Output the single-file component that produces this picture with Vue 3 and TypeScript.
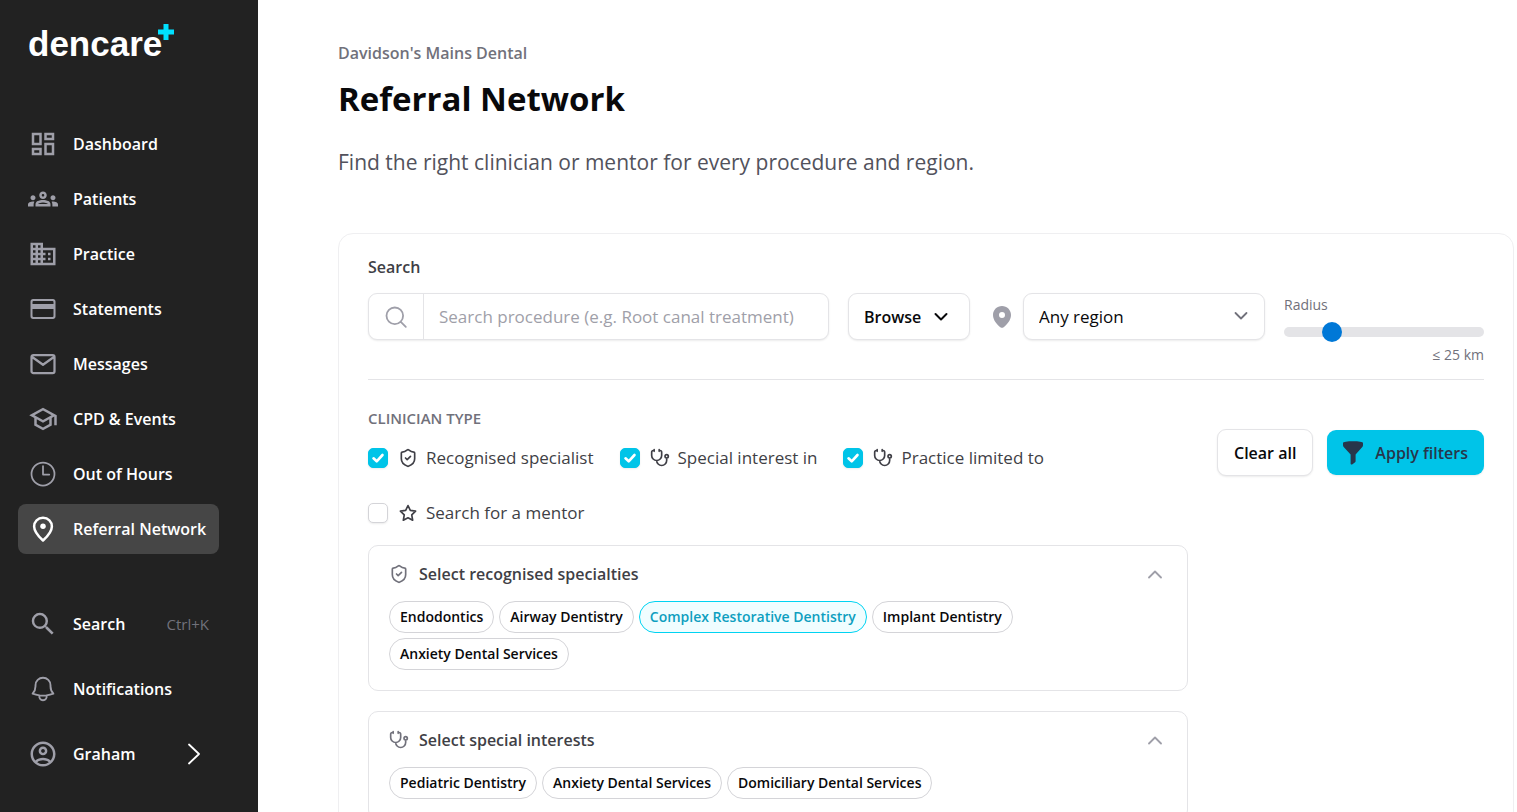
<script setup lang="ts">
import { ref } from 'vue'

interface NavItem {
  label: string
  icon: string
  active?: boolean
}

interface ClinicianType {
  label: string
  icon: 'shield' | 'stethoscope' | 'star'
  checked: boolean
}

interface Chip {
  label: string
  selected?: boolean
}

interface Panel {
  title: string
  icon: 'shield' | 'stethoscope'
  chips: Chip[]
}

const solid: Record<string, string> = {
  dashboard:
    'M19 5v2h-4V5h4M9 5v6H5V5h4m10 8v6h-4v-6h4M9 17v2H5v-2h4M21 3h-8v6h8V3zM11 3H3v10h8V3zm10 8h-8v10h8V11zm-10 4H3v6h8v-6z',
  groups:
    'M4 13c1.1 0 2-.9 2-2s-.9-2-2-2-2 .9-2 2 .9 2 2 2zm1.13 1.1c-.37-.06-.74-.1-1.13-.1-.99 0-1.93.21-2.78.58C.48 14.9 0 15.62 0 16.43V18h4.5v-1.61c0-.83.23-1.61.63-2.29zM20 13c1.1 0 2-.9 2-2s-.9-2-2-2-2 .9-2 2 .9 2 2 2zm4 3.43c0-.81-.48-1.53-1.22-1.85-.85-.37-1.79-.58-2.78-.58-.39 0-.76.04-1.13.1.4.68.63 1.46.63 2.29V18H24v-1.57zm-7.76-2.78c-1.17-.52-2.61-.9-4.24-.9-1.63 0-3.07.39-4.24.9C6.68 14.13 6 15.21 6 16.39V18h12v-1.61c0-1.18-.68-2.26-1.76-2.74zM8.07 16c.09-.23.13-.39.91-.69.97-.38 1.99-.56 3.02-.56s2.05.18 3.02.56c.77.3.81.46.91.69H8.07zM12 8c.55 0 1 .45 1 1s-.45 1-1 1-1-.45-1-1 .45-1 1-1m0-2c-1.66 0-3 1.34-3 3s1.34 3 3 3 3-1.34 3-3-1.34-3-3-3z',
  building:
    'M12 7V3H2v18h20V7H12zM6 19H4v-2h2v2zm0-4H4v-2h2v2zm0-4H4V9h2v2zm0-4H4V5h2v2zm4 12H8v-2h2v2zm0-4H8v-2h2v2zm0-4H8V9h2v2zm0-4H8V5h2v2zm10 12h-8v-2h2v-2h-2v-2h2v-2h-2V9h8v10zm-2-8h-2v2h2v-2zm0 4h-2v2h2v-2z',
  card: 'M20 4H4c-1.110 0-1.990.890-1.990 2L2 18c0 1.110.890 2 2 2h16c1.110 0 2-.890 2-2V6c0-1.110-.890-2-2-2zm.4 13.600c0 .5-.3.8-.8.8H4.400c-.5 0-.8-.3-.8-.8V12h16.800v5.600zm0-9.600H3.600V6.400c0-.5.3-.8.8-.8h15.200c.5 0 .8.3.8.8V8z',
  school:
    'M12 3 1 9l4 2.180v6L12 21l7-3.820v-6l2-1.090V17h2V9L12 3zm6.820 6L12 12.720 5.180 9 12 5.280 18.820 9zM17 15.990l-5 2.730-5-2.730v-3.720L12 15l5-2.730v3.720z',
  search:
    'M15.500 14h-.790l-.280-.270A6.471 6.471 0 0 0 16 9.500 6.500 6.500 0 1 0 9.500 16c1.610 0 3.090-.590 4.230-1.570l.270.280v.790l5 4.990L20.490 19l-4.990-5zm-6 0C7.010 14 5 11.990 5 9.500S7.010 5 9.500 5 14 7.010 14 9.500 11.990 14 9.500 14z',
  account:
    'M12 2C6.480 2 2 6.480 2 12s4.480 10 10 10 10-4.480 10-10S17.520 2 12 2zM7.350 18.500C8.660 17.560 10.260 17 12 17s3.340.560 4.650 1.500C15.340 19.440 13.740 20 12 20s-3.340-.560-4.650-1.500zm10.790-1.380C16.450 15.800 14.320 15 12 15s-4.450.8-6.140 2.120C4.700 15.730 4 13.950 4 12c0-4.420 3.580-8 8-8s8 3.580 8 8c0 1.950-.7 3.730-1.860 5.120zM12 6c-1.930 0-3.500 1.570-3.500 3.500S10.070 13 12 13s3.500-1.570 3.500-3.500S13.930 6 12 6zm0 5c-.830 0-1.500-.670-1.500-1.500S11.170 8 12 8s1.500.670 1.500 1.500S12.830 11 12 11z',
}

const lined: Record<string, { d: string; w: number }> = {
  mail: {
    d: 'M4.300 4.800h15.400a1.500 1.500 0 0 1 1.500 1.500v11.400a1.500 1.500 0 0 1-1.500 1.500H4.300a1.500 1.500 0 0 1-1.500-1.500V6.300a1.500 1.500 0 0 1 1.500-1.500zM3.600 6.600 12 12.600l8.400-6',
    w: 1.8,
  },
  clock: { d: 'M12 2.800a9.200 9.200 0 1 0 0 18.400a9.200 9.200 0 1 0 0-18.400zM12 5.600v6.800h5', w: 1.4 },
  pin: {
    d: 'M12 3C7.800 3 4.900 6.100 4.900 9.900c0 4.700 4.300 8.700 7.100 11.300 2.800-2.600 7.100-6.600 7.100-11.300C19.100 6.100 16.200 3 12 3z',
    w: 2,
  },
  bell: {
    d: 'M14.857 17.082a23.848 23.848 0 0 0 5.454-1.310A8.967 8.967 0 0 1 18 9.750V9A6 6 0 0 0 6 9v.750a8.967 8.967 0 0 1-2.312 6.022c1.733.640 3.560 1.085 5.455 1.310m5.714 0a24.255 24.255 0 0 1-5.714 0m5.714 0a3 3 0 1 1-5.714 0',
    w: 1.5,
  },
}

const small: Record<string, string> = {
  shield:
    'M20 13c0 5-3.500 7.500-7.660 8.950a1 1 0 0 1-.670-.010C7.500 20.500 4 18 4 13V6a1 1 0 0 1 1-1c2 0 4.500-1.200 6.240-2.720a1.170 1.170 0 0 1 1.520 0C14.510 3.810 17 5 19 5a1 1 0 0 1 1 1zM9 12l2 2 4-4',
  stethoscope:
    'M11 2v2M5 2v2M5 3H4a2 2 0 0 0-2 2v4a6 6 0 0 0 12 0V5a2 2 0 0 0-2-2h-1M8 15a6 6 0 0 0 12 0v-3M20 8a2 2 0 1 0 0 4a2 2 0 1 0 0-4z',
  star: 'M12 3l2.800 5.900 6.300.9-4.600 4.500 1.100 6.400L12 17.700l-5.600 3 1.100-6.400L2.900 9.800l6.300-.9z',
}

const primaryNav: NavItem[] = [
  { label: 'Dashboard', icon: 'dashboard' },
  { label: 'Patients', icon: 'groups' },
  { label: 'Practice', icon: 'building' },
  { label: 'Statements', icon: 'card' },
  { label: 'Messages', icon: 'mail' },
  { label: 'CPD & Events', icon: 'school' },
  { label: 'Out of Hours', icon: 'clock' },
  { label: 'Referral Network', icon: 'pin', active: true },
]

const clinicianTypes = ref<ClinicianType[]>([
  { label: 'Recognised specialist', icon: 'shield', checked: true },
  { label: 'Special interest in', icon: 'stethoscope', checked: true },
  { label: 'Practice limited to', icon: 'stethoscope', checked: true },
  { label: 'Search for a mentor', icon: 'star', checked: false },
])

const panels = ref<Panel[]>([
  {
    title: 'Select recognised specialties',
    icon: 'shield',
    chips: [
      { label: 'Endodontics' },
      { label: 'Airway Dentistry' },
      { label: 'Complex Restorative Dentistry', selected: true },
      { label: 'Implant Dentistry' },
      { label: 'Anxiety Dental Services' },
    ],
  },
  {
    title: 'Select special interests',
    icon: 'stethoscope',
    chips: [
      { label: 'Pediatric Dentistry' },
      { label: 'Anxiety Dental Services' },
      { label: 'Domiciliary Dental Services' },
    ],
  },
])

const query = ref('')
const region = ref('any')
const radius = ref(25)

function clearAll() {
  query.value = ''
  region.value = 'any'
  clinicianTypes.value.forEach((t) => (t.checked = false))
  panels.value.forEach((p) => p.chips.forEach((c) => (c.selected = false)))
}
</script>

<template>
  <div class="app">
    <aside class="sidebar">
      <a class="logo" href="#" aria-label="dencare plus">
        <span>dencare</span>
        <svg class="plus" viewBox="0 0 16 16" aria-hidden="true"><path d="M5.500 0h5v5.500H16v5h-5.500V16h-5v-5.500H0v-5h5.500z" /></svg>
      </a>

      <nav class="nav primary" aria-label="Main">
        <a v-for="item in primaryNav" :key="item.label" href="#" class="nav-item" :class="{ active: item.active }">
          <svg class="nav-icon" viewBox="0 0 24 24" aria-hidden="true">
            <path v-if="solid[item.icon]" :d="solid[item.icon]" fill="currentColor" fill-rule="evenodd" />
            <path v-else :d="lined[item.icon].d" :stroke-width="lined[item.icon].w" class="line" />
            <circle v-if="item.icon === 'pin'" cx="12" cy="9.800" r="2.200" fill="currentColor" />
          </svg>
          <span>{{ item.label }}</span>
        </a>
      </nav>

      <nav class="nav secondary" aria-label="Account">
        <button type="button" class="nav-item">
          <svg class="nav-icon" viewBox="0 0 24 24" aria-hidden="true"><path :d="solid.search" fill="currentColor" /></svg>
          <span>Search</span>
          <kbd>Ctrl+K</kbd>
        </button>
        <button type="button" class="nav-item">
          <svg class="nav-icon" viewBox="0 0 24 24" aria-hidden="true">
            <path :d="lined.bell.d" :stroke-width="lined.bell.w" class="line" />
          </svg>
          <span>Notifications</span>
        </button>
        <button type="button" class="nav-item">
          <svg class="nav-icon" viewBox="0 0 24 24" aria-hidden="true"><path :d="solid.account" fill="currentColor" fill-rule="evenodd" /></svg>
          <span>Graham</span>
          <svg class="nav-arrow" viewBox="0 0 12 22" aria-hidden="true"><path d="M1 1.500l10 9.500-10 9.500" class="line" stroke-width="1.800" /></svg>
        </button>
      </nav>
    </aside>

    <main class="main">
      <header class="page-head">
        <p class="practice">Davidson's Mains Dental</p>
        <h1>Referral Network</h1>
        <p class="lead">Find the right clinician or mentor for every procedure and region.</p>
      </header>

      <section class="card">
        <label class="search-label" for="procedure">Search</label>
        <div class="search-row">
          <div class="search-box">
            <span class="search-icon">
              <svg viewBox="0 0 24 24" aria-hidden="true"><path d="M10.800 2.500a8.300 8.300 0 1 0 0 16.600a8.300 8.300 0 1 0 0-16.600zM16.800 16.800l5 5" class="line" stroke-width="1.800" /></svg>
            </span>
            <input id="procedure" v-model="query" type="text" placeholder="Search procedure (e.g. Root canal treatment)" />
          </div>
          <button type="button" class="btn browse">
            Browse
            <svg viewBox="0 0 14 10" aria-hidden="true"><path d="M1.500 2l5.500 5.500L12.500 2" class="line" stroke-width="2" /></svg>
          </button>
          <div class="region">
            <svg class="region-pin" viewBox="0 0 18 22" aria-hidden="true">
              <path fill="currentColor" fill-rule="evenodd" d="M9 0C4 0 0 3.900 0 8.900c0 5.400 4.400 9.900 7.700 12.500.8.600 1.800.6 2.600 0C13.600 18.800 18 14.300 18 8.900 18 3.900 14 0 9 0zm0 6a3 3 0 1 0 0 6a3 3 0 1 0 0-6z" />
            </svg>
            <div class="select">
              <select v-model="region" aria-label="Region">
                <option value="any">Any region</option>
              </select>
              <svg viewBox="0 0 14 10" aria-hidden="true"><path d="M1.500 2l5.500 5.500L12.500 2" class="line" stroke-width="1.800" /></svg>
            </div>
          </div>
          <div class="radius">
            <label for="radius">Radius</label>
            <input id="radius" v-model.number="radius" type="range" min="5" max="100" />
            <output for="radius">≤ {{ radius }} km</output>
          </div>
        </div>

        <hr />

        <div class="filters">
          <div class="filters-main">
            <fieldset>
              <legend>CLINICIAN TYPE</legend>
              <div class="types">
                <label v-for="t in clinicianTypes" :key="t.label" class="type">
                  <span class="tick">
                    <input v-model="t.checked" type="checkbox" />
                    <svg v-if="t.checked" viewBox="0 0 20 20" aria-hidden="true"><path d="M5.500 10.300l3.200 3L14.500 7" class="line" stroke-width="2.600" /></svg>
                  </span>
                  <svg class="small-icon" viewBox="0 0 24 24" aria-hidden="true"><path :d="small[t.icon]" class="line" stroke-width="2" /></svg>
                  <span>{{ t.label }}</span>
                </label>
              </div>
            </fieldset>

            <section v-for="p in panels" :key="p.title" class="panel">
              <button type="button" class="panel-head" aria-expanded="true">
                <svg class="small-icon" viewBox="0 0 24 24" aria-hidden="true"><path :d="small[p.icon]" class="line" stroke-width="2" /></svg>
                <span>{{ p.title }}</span>
                <svg class="collapse" viewBox="0 0 14 9" aria-hidden="true"><path d="M1 7.500l6-6 6 6" class="line" stroke-width="1.800" /></svg>
              </button>
              <div class="chips">
                <button
                  v-for="c in p.chips"
                  :key="c.label"
                  type="button"
                  class="chip"
                  :class="{ selected: c.selected }"
                  :aria-pressed="!!c.selected"
                  @click="c.selected = !c.selected"
                >
                  {{ c.label }}
                </button>
              </div>
            </section>
          </div>

          <div class="actions">
            <button type="button" class="btn" @click="clearAll">Clear all</button>
            <button type="button" class="btn apply">
              <svg viewBox="0 0 20 24" aria-hidden="true"><path d="M0 2C0 .9 4.500.3 10 .3S20 .9 20 2v2.200c0 .7-.3 1.300-.7 1.800L12.600 13.500v6.800c0 .5-.3 1-.8 1.300l-2.700 1.800c-.7.4-1.500 0-1.500-.8v-9.100L.7 6C.3 5.500 0 4.900 0 4.200z" fill="currentColor" /></svg>
              Apply filters
            </button>
          </div>
        </div>
      </section>
    </main>
  </div>
</template>

<style>
body {
  margin: 0;
}
</style>

<style scoped>
.app,
.app * {
  box-sizing: border-box;
}

.app {
  display: flex;
  height: 100vh;
  background: #fff;
  color: #09090b;
  font-family: 'Segoe UI', 'Open Sans', 'Noto Sans', sans-serif;
  font-size: 17px;
  line-height: 24px;
}

button,
input,
select {
  font: inherit;
  color: inherit;
}

button {
  cursor: pointer;
}

.line {
  fill: none;
  stroke: currentColor;
  stroke-linecap: round;
  stroke-linejoin: round;
}

.sidebar {
  flex: none;
  width: 258px;
  padding: 24px 18px;
  background: #222;
  color: #fff;
}

.logo {
  display: flex;
  align-items: flex-start;
  height: 40px;
  margin: 0 10px 55px;
  color: #fff;
  font-family: 'Liberation Sans', Arial, sans-serif;
  font-size: 35px;
  font-weight: 700;
  line-height: 40px;
  text-decoration: none;
}

.plus {
  width: 16px;
  height: 16px;
  margin-left: -4px;
  fill: #00e0ff;
}

.nav {
  display: flex;
  flex-direction: column;
  align-items: stretch;
  width: 201px;
}

.primary {
  gap: 5px;
}

.secondary {
  gap: 15px;
  margin-top: 45px;
}

.nav-item {
  display: flex;
  align-items: center;
  height: 50px;
  padding: 0 10px;
  border: 0;
  border-radius: 8px;
  background: none;
  color: #fff;
  font-size: 16px;
  font-weight: 600;
  text-decoration: none;
  white-space: nowrap;
}

.nav-item.active {
  background: #464646;
}

.nav-icon {
  flex: none;
  width: 30px;
  height: 30px;
  margin-right: 15px;
  color: #9f9fa9;
}

.active .nav-icon {
  color: #fff;
}

kbd {
  margin-left: auto;
  color: #71717b;
  font-family: inherit;
  font-size: 15px;
  font-weight: 400;
}

.nav-arrow {
  width: 12px;
  height: 22px;
  margin: 0 9px 0 auto;
}

.main {
  flex: 1;
  min-width: 0;
  padding: 41px 3px 40px 80px;
  overflow-y: auto;
  scrollbar-width: none;
}

.page-head p,
.page-head h1 {
  margin: 0;
}

.practice {
  color: #71717b;
  font-size: 16px;
  font-weight: 600;
}

.page-head h1 {
  margin-top: 8px;
  font-size: 33px;
  font-weight: 700;
  line-height: 52px;
}

.page-head .lead {
  margin-top: 21px;
  color: #52525c;
  font-size: 21px;
  line-height: 32px;
}

.card {
  margin-top: 55px;
  padding: 21px 29px 29px;
  border: 1px solid #efeff1;
  border-radius: 15px;
}

.search-label {
  display: block;
  color: #3f3f46;
  font-size: 16px;
  font-weight: 600;
}

.search-row {
  display: flex;
  align-items: flex-start;
  gap: 19px;
  margin-top: 14px;
}

.search-box,
.btn,
.select select {
  height: 47px;
  border: 1px solid #e4e4e7;
  border-radius: 9px;
  background: #fff;
  box-shadow: 0 1px 2px rgb(0 0 0 / 8%);
}

.search-box {
  display: flex;
  flex: 1;
  min-width: 0;
}

.search-icon {
  display: flex;
  flex: none;
  align-items: center;
  justify-content: center;
  width: 55px;
  border-right: 1px solid #e4e4e7;
  color: #9f9fa9;
}

.search-icon svg {
  width: 24px;
  height: 24px;
}

.search-box input {
  flex: 1;
  min-width: 0;
  padding: 0 15px;
  border: 0;
  outline: 0;
  background: none;
}

.search-box input::placeholder {
  color: #9f9fa9;
  opacity: 1;
}

.btn {
  display: flex;
  flex: none;
  align-items: center;
  justify-content: center;
  padding: 0 15px;
  color: #09090b;
  font-size: 16px;
  font-weight: 600;
  white-space: nowrap;
}

.browse {
  justify-content: flex-start;
  width: 122px;
  gap: 13px;
}

.browse svg,
.select svg {
  width: 14px;
  height: 10px;
}

.region {
  display: flex;
  align-items: center;
  gap: 12px;
  margin-left: 4px;
}

.region-pin {
  width: 18px;
  height: 22px;
  color: #9f9fa9;
}

.select {
  position: relative;
  width: 242px;
}

.select select {
  display: block;
  width: 100%;
  padding: 0 40px 0 15px;
  appearance: none;
}

.select svg {
  position: absolute;
  top: 18px;
  right: 17px;
  color: #71717b;
  pointer-events: none;
}

.radius {
  display: flex;
  flex: none;
  flex-direction: column;
  width: 200px;
  color: #71717b;
  font-size: 14px;
  line-height: 24px;
}

.radius input {
  width: 100%;
  height: 10px;
  margin: 10px 0 6px;
  border-radius: 5px;
  background: #e4e4e7;
  appearance: none;
}

.radius input::-webkit-slider-thumb {
  width: 20px;
  height: 20px;
  border-radius: 50%;
  background: #0078d7;
  appearance: none;
}

.radius output {
  text-align: right;
}

hr {
  height: 1px;
  margin: 12px 0 0;
  border: 0;
  background: #e4e4e7;
}

.filters {
  display: flex;
  align-items: flex-start;
  gap: 29px;
  margin-top: 26px;
}

.filters-main {
  flex: 1;
  min-width: 0;
}

fieldset {
  min-width: 0;
  margin: 0;
  padding: 0;
  border: 0;
}

legend {
  padding: 0;
  color: #71717b;
  font-size: 15px;
  font-weight: 600;
}

.types {
  display: flex;
  flex-wrap: wrap;
  gap: 31px 26px;
  margin-top: 16px;
}

.type {
  display: flex;
  align-items: center;
  color: #3f3f46;
}

.tick {
  position: relative;
  display: block;
  width: 20px;
  height: 20px;
  margin-right: 10px;
}

.tick input {
  display: block;
  width: 20px;
  height: 20px;
  margin: 0;
  border: 1px solid #d4d4d8;
  border-radius: 5px;
  background: #fff;
  box-shadow: 0 1px 2px rgb(0 0 0 / 8%);
  appearance: none;
}

.tick input:checked {
  border-color: #00c4e8;
  background: #00c4e8;
}

.tick svg {
  position: absolute;
  inset: 0;
  color: #fff;
  pointer-events: none;
}

.small-icon {
  flex: none;
  width: 20px;
  height: 20px;
  margin-right: 8px;
}

.panel {
  margin-top: 20px;
  padding: 14px 20px 20px;
  border: 1px solid #e4e4e7;
  border-radius: 10px;
}

.panel-head {
  display: flex;
  align-items: center;
  width: 100%;
  padding: 0;
  border: 0;
  background: none;
  color: #3f3f46;
  font-size: 16px;
  font-weight: 600;
  line-height: 28px;
}

.panel-head .small-icon {
  margin-right: 10px;
  color: #71717b;
}

.collapse {
  width: 14px;
  height: 9px;
  margin: 0 5px 0 auto;
  color: #9f9fa9;
}

.chips {
  display: flex;
  flex-wrap: wrap;
  gap: 5px;
  margin-top: 13px;
}

.chip {
  height: 32px;
  padding: 0 10px;
  border: 1px solid #d4d4d8;
  border-radius: 16px;
  background: #fff;
  color: #09090b;
  font-size: 14px;
  font-weight: 600;
}

.chip.selected {
  border-color: #00d3f2;
  background: #f0fdff;
  color: #0e9fc0;
}

.actions {
  display: flex;
  align-items: center;
  gap: 14px;
  margin-top: 23px;
}

.actions .btn {
  padding: 0 16px;
}

.actions .apply {
  height: 45px;
  gap: 12px;
  border: 0;
  background: #00c4e8;
  color: #27364b;
}

.apply svg {
  width: 20px;
  height: 24px;
}
</style>
